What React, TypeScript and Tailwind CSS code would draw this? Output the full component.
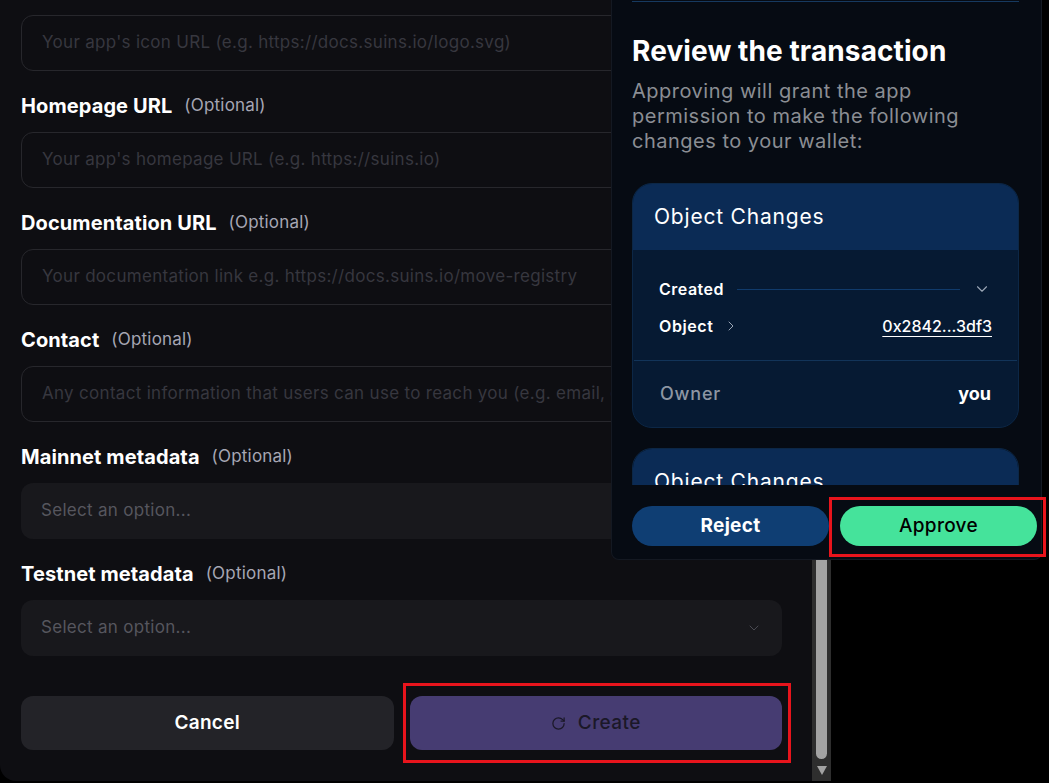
import { ChevronDown, ChevronRight, RotateCw } from "lucide-react";

const fields = [
  { label: "Homepage URL", placeholder: "Your app's homepage URL (e.g. https://suins.io)" },
  { label: "Documentation URL", placeholder: "Your documentation link e.g. https://docs.suins.io/move-registry" },
  {
    label: "Contact",
    placeholder: "Any contact information that users can use to reach you (e.g. email, discord, twitter)",
  },
];

const selects = ["Mainnet metadata", "Testnet metadata"];

function Label({ text }: { text: string }) {
  return (
    <div className="mt-6 mb-[15px] flex h-[22px] items-center gap-3">
      <span className="text-[20px] font-bold tracking-[0.1px] text-white">{text}</span>
      <span className="text-[17px] tracking-[0.2px] text-[#a6a6b4]">(Optional)</span>
    </div>
  );
}

function ObjectCard({ full }: { full: boolean }) {
  return (
    <div className="overflow-hidden rounded-[20px] border border-[#0c2746] bg-[#061a33]">
      <div className="flex h-[66px] items-center bg-[#0b2b55] px-[21px]">
        <span className="text-[21px] tracking-[0.8px] text-white">Object Changes</span>
      </div>
      {full && (
        <div className="pt-[27px] pb-[22px]">
          <div className="flex h-6 items-center px-[26px]">
            <span className="text-[16px] font-semibold tracking-[0.5px] text-white">Created</span>
            <div className="mx-[13px] h-px flex-1 bg-[#103b6c]" />
            <ChevronDown size={18} strokeWidth={1.5} className="mr-[1px] text-[#9aa6b6]" />
          </div>
          <div className="mt-[13px] flex h-6 items-center px-[26px]">
            <span className="text-[16px] font-semibold tracking-[0.6px] text-white">Object</span>
            <ChevronRight size={16} strokeWidth={1.5} className="ml-[9px] text-[#9aa6b6]" />
            <span className="ml-auto text-[16px] font-medium text-white underline underline-offset-[4px]">
              0x2842...3df3
            </span>
          </div>
          <div className="mx-px mt-[22px] h-px bg-[#123459]" />
          <div className="mt-[20px] flex h-6 items-center px-[27px]">
            <span className="text-[18px] font-medium tracking-[0.8px] text-[#8d96a3]">Owner</span>
            <span className="ml-auto text-[18px] font-bold text-white">you</span>
          </div>
        </div>
      )}
    </div>
  );
}

export default function App() {
  return (
    <div className="relative h-[783px] w-[1049px] overflow-hidden bg-black font-['Inter',sans-serif]">
      <div className="flex h-[781px] w-[831px] overflow-hidden rounded-bl-2xl bg-[#0e0e12]">
        {/* form (scrolled) */}
        <div className="flex w-[812px] flex-col pt-[15px] pr-[30px] pl-[21px]">
          <div className="flex h-14 items-center rounded-xl border border-[#27272c] px-5 text-[17px] tracking-[0.3px] whitespace-nowrap text-[#37373f]">
            Your app's icon URL (e.g. https://docs.suins.io/logo.svg)
          </div>
          {fields.map((f) => (
            <div key={f.label}>
              <Label text={f.label} />
              <div className="flex h-14 items-center overflow-hidden rounded-xl border border-[#27272c] px-5 text-[17px] tracking-[0.3px] whitespace-nowrap text-[#37373f]">
                {f.placeholder}
              </div>
            </div>
          ))}
          {selects.map((s) => (
            <div key={s}>
              <Label text={s} />
              <div className="flex h-14 items-center justify-between rounded-xl bg-[#18181c] px-5 text-[17px] tracking-[0.3px] text-[#56565e]">
                <span>Select an option...</span>
                <ChevronDown size={16} strokeWidth={1.5} className="text-[#4a4a52]" />
              </div>
            </div>
          ))}
          <div className="mt-[40px] grid grid-cols-2 gap-4">
            <button className="h-[54px] rounded-xl bg-[#232328] text-[19px] font-semibold tracking-[0.3px] text-white">
              Cancel
            </button>
            <button className="flex h-[54px] items-center justify-center gap-3 rounded-xl bg-[#463c72] text-[19px] font-medium tracking-[0.4px] text-[#1b1828]">
              <RotateCw size={15} strokeWidth={2} />
              Create
            </button>
          </div>
        </div>
        {/* scrollbar */}
        <div className="flex w-[19px] flex-col items-center bg-[#2e2e2e] pt-[300px] pb-[6px]">
          <div className="w-[11px] flex-1 rounded-full bg-[#a3a3a3]" />
          <div className="mt-[7px] h-0 w-0 border-x-[5px] border-t-[9px] border-x-transparent border-t-[#a3a3a3]" />
        </div>
      </div>

      {/* wallet popup */}
      <div className="absolute top-0 left-[611px] flex h-[560px] w-[431px] flex-col overflow-hidden rounded-b-lg border-x border-b border-[#141922] bg-[#060b13]">
        <div className="flex-1 overflow-hidden pr-[22px] pl-[20px]">
          <div className="mt-px h-px bg-[#16395f]" />
          <h1 className="mt-[33px] text-[28px] leading-8 font-bold tracking-[0.1px] text-white">
            Review the transaction
          </h1>
          <p className="mt-[12px] text-[20px] leading-[25px] tracking-[0.5px] text-[#8b8e94]">
            Approving will grant the app permission to make the following changes to your wallet:
          </p>
          <div className="mt-[29px] flex flex-col gap-5">
            <ObjectCard full />
            <ObjectCard full={false} />
          </div>
        </div>
        <div className="grid h-[74px] grid-cols-2 gap-[11px] pt-[21px] pr-[4px] pl-[20px]">
          <button className="h-10 rounded-full bg-[#0f3e73] text-[19px] font-bold tracking-[0.3px] text-white">
            Reject
          </button>
          <button className="h-10 rounded-full bg-[#45e39b] text-[19px] font-medium tracking-[0.3px] text-black">
            Approve
          </button>
        </div>
      </div>

      {/* highlight boxes */}
      <div className="absolute top-[683px] left-[403px] h-[80px] w-[388px] border-[3px] border-[#e8141c]" />
      <div className="absolute top-[497px] left-[829px] h-[60px] w-[217px] border-[3px] border-[#e8141c]" />
    </div>
  );
}
